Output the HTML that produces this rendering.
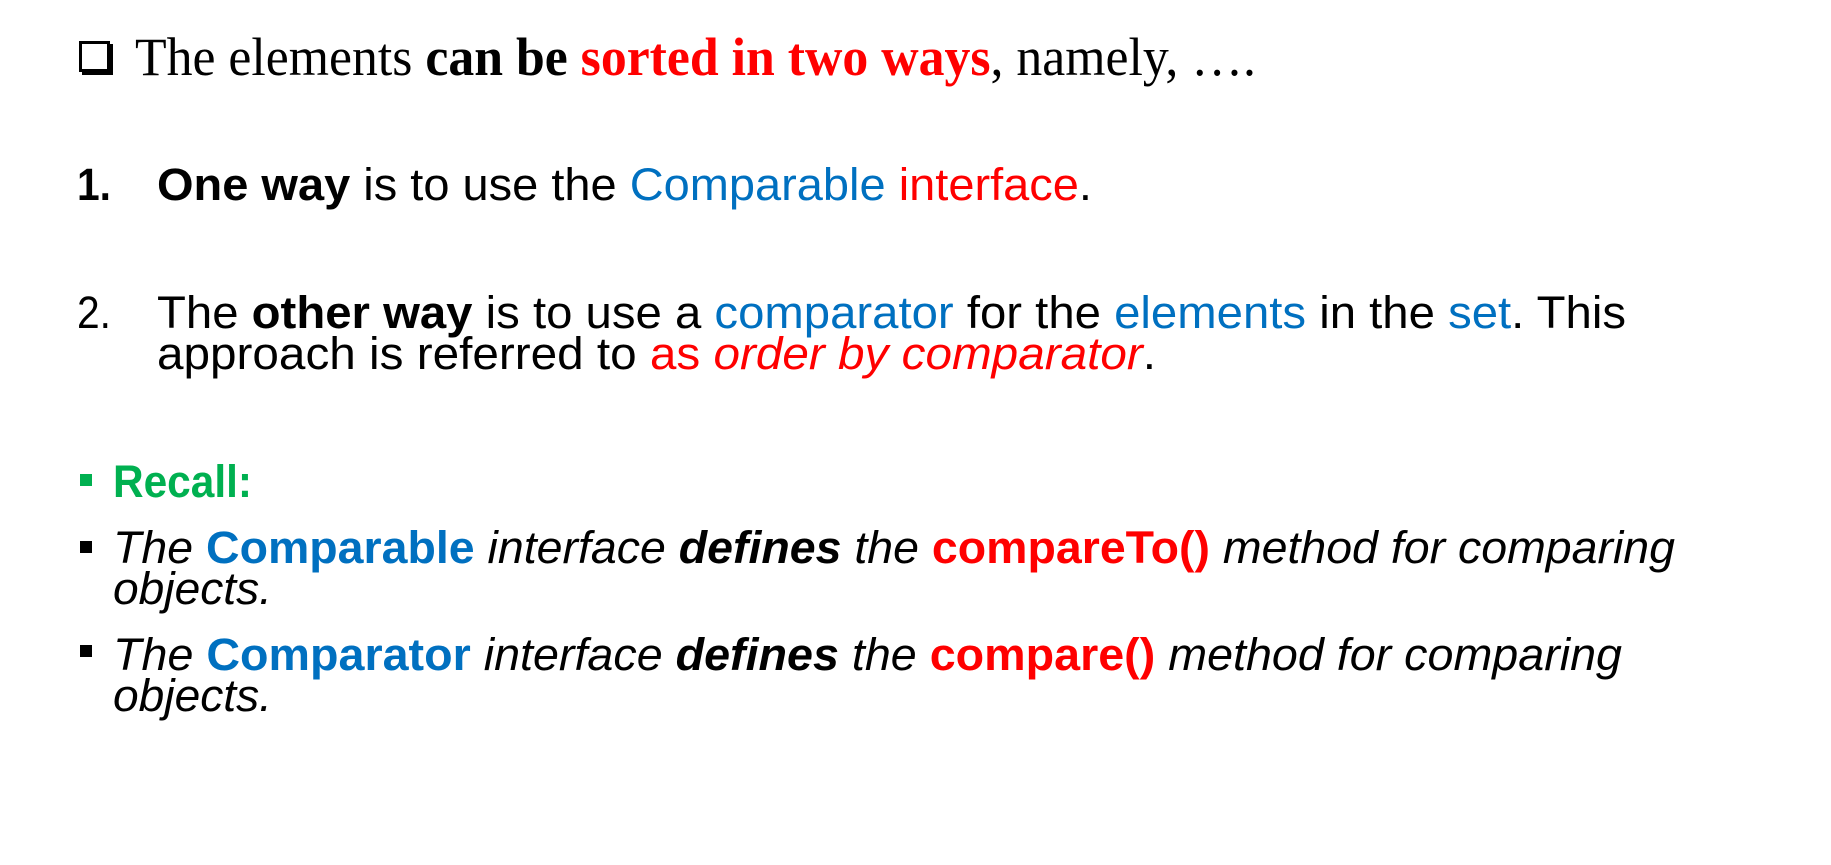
<!DOCTYPE html>
<html><head><meta charset="utf-8">
<style>
html,body{margin:0;padding:0;background:#fff;width:1831px;height:865px;overflow:hidden}
.l{position:absolute;white-space:nowrap;line-height:1;transform-origin:0 0;color:#000}
.s{font-family:"Liberation Sans",sans-serif;font-size:45px}
.t{font-family:"Liberation Serif",serif;font-size:54px}
.r{color:#ff0000}.b{color:#0070c0}.g{color:#00b050}
.sq{position:absolute;background:#000}
</style></head><body>
<div style="position:absolute;left:79px;top:41px;width:31px;height:31px;border:3px solid #000;box-sizing:border-box;box-shadow:3px 3px 0 #000"></div>
<div class="l t" id="a1" style="left:135px;top:30px">The elements <b>can be</b> <b class="r">sorted in two ways</b>, namely, ….</div>

<div class="l s" id="n1" style="left:77px;top:162px"><b>1.</b></div>
<div class="l s" id="a2" style="left:157px;top:162px"><b>One way</b> is to use the <span class="b">Comparable</span> <span class="r">interface</span>.</div>

<div class="l s" id="n2" style="left:77px;top:290px">2.</div>
<div class="l s" id="a3" style="left:157px;top:290px">The <b>other way</b> is to use a <span class="b">comparator</span> for the <span class="b">elements</span> in the <span class="b">set</span>. This</div>
<div class="l s" id="a4" style="left:157px;top:331px">approach is referred to <span class="r">as <i>order by comparator</i></span>.</div>

<div class="sq" style="left:80px;top:474px;width:12px;height:12px;background:#00b050"></div>
<div class="l s" id="a5" style="left:113px;top:459px"><b class="g">Recall:</b></div>

<div class="sq" style="left:80px;top:541px;width:12px;height:12px"></div>
<div class="l s" id="a6" style="left:113px;top:525px"><i>The <b class="b" style="font-style:normal">Comparable</b> interface <b>defines</b> the <b class="r" style="font-style:normal">compareTo()</b> method for comparing</i></div>
<div class="l s" id="a7" style="left:113px;top:566px"><i>objects.</i></div>

<div class="sq" style="left:80px;top:645px;width:12px;height:12px"></div>
<div class="l s" id="a8" style="left:113px;top:632px"><i>The <b class="b" style="font-style:normal">Comparator</b> interface <b>defines</b> the <b class="r" style="font-style:normal">compare()</b> method for comparing</i></div>
<div class="l s" id="a9" style="left:113px;top:673px"><i>objects.</i></div>
<script>
var t={a1:1256,a2:1092,a3:1626,a4:1156,a5:252,a6:1675,a7:272,a8:1622,a9:272,n1:111,n2:111};
for(var k in t){var e=document.getElementById(k);var w=e.getBoundingClientRect().width;var L=parseFloat(e.style.left);e.style.transform="scaleX("+((t[k]-L)/w)+")";}
</script>
</body></html>
